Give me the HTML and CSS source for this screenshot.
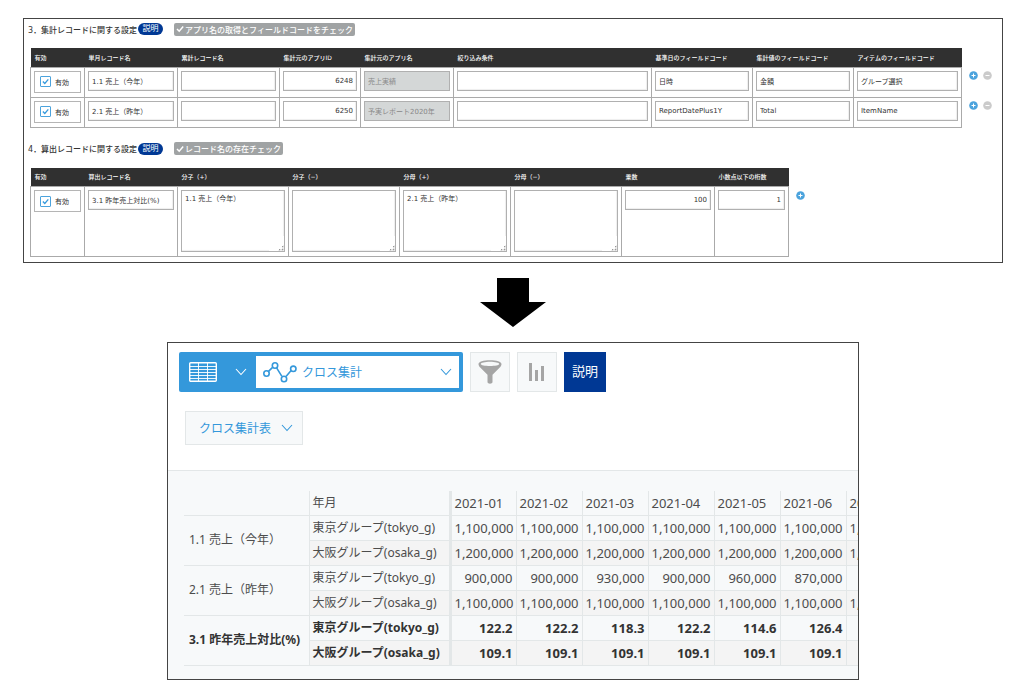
FILE: index.html
```html
<!DOCTYPE html>
<html lang="ja">
<head>
<meta charset="utf-8">
<meta name="viewport" content="width=device-width, initial-scale=1">
<title>クロス集計の設定</title>
<link rel="stylesheet" href="styles.css">
</head>
<body>
<svg class="symbols" aria-hidden="true">
  <symbol id="plus" viewBox="0 0 9 9"><circle cx="4.500" cy="4.500" r="4.300" fill="#4ba3dd"/><path d="M4.500 2.500v4M2.500 4.500h4" stroke="#fff" stroke-width="1"/></symbol>
  <symbol id="minus" viewBox="0 0 9 9"><circle cx="4.500" cy="4.500" r="4.300" fill="#cbcbcb"/><path d="M2.500 4.500h4" stroke="#fff" stroke-width="1"/></symbol>
  <symbol id="check" viewBox="0 0 8 8"><path d="M1 4l2.200 2.200L7.200 1.600" fill="none" stroke="currentColor" stroke-width="1.500"/></symbol>
  <symbol id="chevron" viewBox="0 0 12 8"><path d="M1 1l5 5.500L11 1" fill="none" stroke="currentColor" stroke-width="1.100"/></symbol>
</svg>
<main class="page">
  <section class="settings">
    <div class="heading">
      <h2>3．集計レコードに関する設定</h2>
      <button class="badge" type="button">説明</button>
      <button class="verify" type="button"><svg class="tick"><use href="#check"/></svg>アプリ名の取得とフィールドコードをチェック</button>
    </div>
    <table class="form-table">
      <colgroup><col class="w54"><col class="w93"><col class="w102"><col class="w81"><col class="w93"><col class="w198"><col class="w101"><col class="w101"><col class="w108"><col class="w37"></colgroup>
      <thead><tr><th>有効</th><th>単月レコード名</th><th>累計レコード名</th><th>集計元のアプリID</th><th>集計元のアプリ名</th><th>絞り込み条件</th><th>基準日のフィールドコード</th><th>集計値のフィールドコード</th><th>アイテムのフィールドコード</th><td class="actions"></td></tr></thead>
      <tbody>
        <tr>
          <td><label class="enable"><input type="checkbox" checked><svg class="mark"><use href="#check"/></svg><span>有効</span></label></td>
          <td><input class="field" aria-label="単月レコード名" value="1.1 売上（今年）"></td>
          <td><input class="field" aria-label="累計レコード名"></td>
          <td><input class="field number" aria-label="集計元のアプリID" value="6248"></td>
          <td><input class="field" aria-label="集計元のアプリ名" value="売上実績" disabled></td>
          <td><input class="field" aria-label="絞り込み条件"></td>
          <td><input class="field" aria-label="基準日のフィールドコード" value="日時"></td>
          <td><input class="field" aria-label="集計値のフィールドコード" value="金額"></td>
          <td><input class="field" aria-label="アイテムのフィールドコード" value="グループ選択"></td>
          <td class="actions"><div class="action-list"><button type="button" aria-label="行を追加"><svg><use href="#plus"/></svg></button><button type="button" aria-label="行を削除"><svg><use href="#minus"/></svg></button></div></td>
        </tr>
        <tr>
          <td><label class="enable"><input type="checkbox" checked><svg class="mark"><use href="#check"/></svg><span>有効</span></label></td>
          <td><input class="field" aria-label="単月レコード名" value="2.1 売上（昨年）"></td>
          <td><input class="field" aria-label="累計レコード名"></td>
          <td><input class="field number" aria-label="集計元のアプリID" value="6250"></td>
          <td><input class="field" aria-label="集計元のアプリ名" value="予実レポート2020年" disabled></td>
          <td><input class="field" aria-label="絞り込み条件"></td>
          <td><input class="field" aria-label="基準日のフィールドコード" value="ReportDatePlus1Y"></td>
          <td><input class="field" aria-label="集計値のフィールドコード" value="Total"></td>
          <td><input class="field" aria-label="アイテムのフィールドコード" value="ItemName"></td>
          <td class="actions"><div class="action-list"><button type="button" aria-label="行を追加"><svg><use href="#plus"/></svg></button><button type="button" aria-label="行を削除"><svg><use href="#minus"/></svg></button></div></td>
        </tr>
      </tbody>
    </table>
    <div class="heading">
      <h2>4．算出レコードに関する設定</h2>
      <button class="badge" type="button">説明</button>
      <button class="verify" type="button"><svg class="tick"><use href="#check"/></svg>レコード名の存在チェック</button>
    </div>
    <table class="form-table calc">
      <colgroup><col class="w54"><col class="w93"><col class="w111"><col class="w111"><col class="w111"><col class="w111"><col class="w93"><col class="w74"><col class="w26"></colgroup>
      <thead><tr><th>有効</th><th>算出レコード名</th><th>分子（+）</th><th>分子（−）</th><th>分母（+）</th><th>分母（−）</th><th>乗数</th><th>小数点以下の桁数</th><td class="actions"></td></tr></thead>
      <tbody>
        <tr>
          <td><label class="enable"><input type="checkbox" checked><svg class="mark"><use href="#check"/></svg><span>有効</span></label></td>
          <td><input class="field" aria-label="算出レコード名" value="3.1 昨年売上対比(%)"></td>
          <td><textarea class="field" aria-label="分子（+）">1.1 売上（今年）</textarea></td>
          <td><textarea class="field" aria-label="分子（−）"></textarea></td>
          <td><textarea class="field" aria-label="分母（+）">2.1 売上（昨年）</textarea></td>
          <td><textarea class="field" aria-label="分母（−）"></textarea></td>
          <td><input class="field number" aria-label="乗数" value="100"></td>
          <td><input class="field number" aria-label="小数点以下の桁数" value="1"></td>
          <td class="actions"><div class="action-list"><button type="button" aria-label="行を追加"><svg><use href="#plus"/></svg></button></div></td>
        </tr>
      </tbody>
    </table>
  </section>

  <svg class="arrow" viewBox="0 0 66 49" aria-hidden="true"><path d="M17 0h32v24h17L33 49 0 24h17z"/></svg>

  <section class="report">
    <div class="toolbar">
      <div class="view-picker">
        <button class="view-type" type="button" aria-label="一覧の形式">
          <svg class="grid-icon" viewBox="0 0 28 20"><g fill="none" stroke="#fff"><rect x=".7" y=".7" width="26.600" height="18.600" rx="1" stroke-width="1.400"/><path d="M9.500 1v18M18.500 1v18M1 4.500h26M1 7.500h26M1 10.500h26M1 13.500h26M1 16.500h26" stroke-width=".9"/></g></svg>
          <svg class="chevron"><use href="#chevron"/></svg>
        </button>
        <label class="view-name">
          <svg class="graph-icon" viewBox="0 0 34 21"><g fill="none" stroke="#3498db" stroke-width="1.600"><path d="M5.500 9.300L9.300 5.700M13.600 5.800l5.300 8.600M23 14.400l5.100-5.900"/><circle cx="3.500" cy="11.500" r="2.700"/><circle cx="12" cy="3.500" r="2.700"/><circle cx="21" cy="17" r="2.700"/><circle cx="30.300" cy="6.800" r="2.700"/></g></svg>
          <select aria-label="一覧"><option>クロス集計</option></select>
          <svg class="chevron"><use href="#chevron"/></svg>
        </label>
      </div>
      <button class="tool" type="button" aria-label="絞り込む"><svg viewBox="0 0 24 24"><path fill="#a5a5a5" fill-rule="evenodd" d="M12 .3C5.500.3.500 1.800.500 4c0 1.500.8 2.600 2 3.800l7 7V22c0 2.200 5 2.200 5 0v-7.200l7-7c1.200-1.200 2-2.300 2-3.800C23.500 1.800 18.500.3 12 .3zM12 1.800c5 0 9.200 1 9.200 2.200S17 6 12 6 2.800 5.200 2.800 4 7 1.800 12 1.800z"/></svg></button>
      <button class="tool" type="button" aria-label="グラフ"><svg viewBox="0 0 24 24"><path fill="#a5a5a5" d="M4 3h3v18H4zM10 10h3v11h-3zM16 6h3v15h-3z"/></svg></button>
      <button class="help" type="button">説明</button>
    </div>
    <div class="chart-type">
      <select aria-label="表の種類"><option>クロス集計表</option></select>
      <svg class="chevron"><use href="#chevron"/></svg>
    </div>
    <div class="result">
      <table class="cross">
        <colgroup><col class="c-record"><col class="c-group"><col class="c-month"><col class="c-month"><col class="c-month"><col class="c-month"><col class="c-month"><col class="c-month"><col class="c-month"></colgroup>
        <thead><tr><td></td><th class="group">年月</th><th>2021-01</th><th>2021-02</th><th>2021-03</th><th>2021-04</th><th>2021-05</th><th>2021-06</th><th>2021-07</th></tr></thead>
        <tbody>
          <tr><th class="record" rowspan="2">1.1 売上（今年）</th><th class="group">東京グループ(tokyo_g)</th><td>1,100,000</td><td>1,100,000</td><td>1,100,000</td><td>1,100,000</td><td>1,100,000</td><td>1,100,000</td><td>1,100,000</td></tr>
          <tr class="even"><th class="group">大阪グループ(osaka_g)</th><td>1,200,000</td><td>1,200,000</td><td>1,200,000</td><td>1,200,000</td><td>1,200,000</td><td>1,200,000</td><td>1,200,000</td></tr>
          <tr><th class="record" rowspan="2">2.1 売上（昨年）</th><th class="group">東京グループ(tokyo_g)</th><td>900,000</td><td>900,000</td><td>930,000</td><td>900,000</td><td>960,000</td><td>870,000</td><td></td></tr>
          <tr class="even"><th class="group">大阪グループ(osaka_g)</th><td>1,100,000</td><td>1,100,000</td><td>1,100,000</td><td>1,100,000</td><td>1,100,000</td><td>1,100,000</td><td>1,100,000</td></tr>
          <tr class="strong"><th class="record" rowspan="2">3.1 昨年売上対比(%)</th><th class="group">東京グループ(tokyo_g)</th><td>122.2</td><td>122.2</td><td>118.3</td><td>122.2</td><td>114.6</td><td>126.4</td><td></td></tr>
          <tr class="strong even"><th class="group">大阪グループ(osaka_g)</th><td>109.1</td><td>109.1</td><td>109.1</td><td>109.1</td><td>109.1</td><td>109.1</td><td></td></tr>
        </tbody>
      </table>
    </div>
  </section>
</main>
</body>
</html>
```

FILE: styles.css
```css
* { box-sizing: border-box; }

body {
  margin: 0;
  background: #fff;
  color: #333;
  font-family: "Noto Sans", "Noto Sans CJK JP", sans-serif;
  font-size: 12px;
}

button, input, select, textarea { font: inherit; color: inherit; margin: 0; }
button { padding: 0; border: 0; background: none; cursor: pointer; }
svg { display: block; }
.symbols { display: none; }

.page { padding: 18px 21px 18px 23px; }

/* Record settings */
.settings {
  border: 1px solid #444;
  padding: 0 6px 5px 6px;
  font-family: "DejaVu Sans", "Noto Sans CJK JP", sans-serif;
  font-size: 7px;
}

.heading {
  display: flex;
  align-items: center;
  height: 20px;
  margin: 0 -2px 9px;
}
.form-table + .heading { margin-top: 11px; }

.heading h2 { margin: 0; font-size: 8px; font-weight: 500; }

.badge {
  margin-left: 1px;
  width: 25px;
  height: 12px;
  border-radius: 6px;
  background: #003894;
  color: #fff;
  font-size: 8px;
  line-height: 12px;
}

.verify {
  display: flex;
  align-items: center;
  gap: 1px;
  margin-left: 11px;
  padding: 0 2px;
  height: 13px;
  border-radius: 2px;
  background: #a0a3a4;
  color: #fff;
  font-size: 8px;
  font-weight: 500;
}
.tick { width: 8px; height: 8px; }

.form-table {
  width: 100%;
  table-layout: fixed;
  border-collapse: collapse;
}
.form-table.calc { width: 81%; }
.w26 { width: 26px; }
.w37 { width: 37px; }
.w54 { width: 54px; }
.w74 { width: 74px; }
.w81 { width: 81px; }
.w93 { width: 93px; }
.w101 { width: 101px; }
.w102 { width: 102px; }
.w108 { width: 108px; }
.w111 { width: 111px; }
.w198 { width: 198px; }

.form-table th {
  height: 19px;
  padding: 0 4px;
  background: #303030;
  color: #fff;
  font-size: 6px;
  font-weight: 500;
  text-align: left;
  white-space: nowrap;
}
.form-table td {
  padding: 3px 3px 4px;
  border: 1px solid #aaa;
  vertical-align: top;
}
.form-table .actions { border: 0; padding: 4px 0 0 7px; }

.enable {
  display: grid;
  grid-template-columns: 11px 1fr;
  align-items: center;
  column-gap: 4px;
  height: 22px;
  padding-left: 5px;
  border: 1px solid #b5b5b5;
}
.enable input {
  grid-area: 1 / 1;
  appearance: none;
  width: 11px;
  height: 11px;
  border: 1px solid #4ba3dd;
  border-radius: 1px;
}
.mark {
  grid-area: 1 / 1;
  justify-self: center;
  width: 7px;
  height: 7px;
  color: #3498db;
}
.enable input:not(:checked) + .mark { visibility: hidden; }

.field {
  display: block;
  width: 100%;
  height: 20px;
  padding: 0 3px;
  border: 1px solid #b0b0b0;
  border-radius: 0;
  background: #fff;
  box-shadow: inset -1px -1px 1px #eee;
}
.field:disabled { background: #d4d7d7; color: #888; box-shadow: none; }
.number { text-align: right; }
textarea.field { height: 62px; padding-top: 3px; line-height: 11px; resize: vertical; }
textarea.field::-webkit-resizer {
  background:
    linear-gradient(135deg, #fff 78%, transparent 78%),
    radial-gradient(#999 40%, transparent 50%) 0 0 / 3px 3px;
}

.action-list { display: flex; gap: 5px; }
.action-list svg { width: 9px; height: 9px; }

.arrow { width: 66px; height: 49px; margin: 15px auto; }

/* Cross tabulation report */
.report {
  width: 71%;
  max-width: 692px;
  margin: 0 auto;
  border: 1px solid #444;
  overflow: hidden;
}

.toolbar { display: flex; gap: 7px; padding: 9px 10px 0 11px; height: 49px; }

.view-picker {
  display: flex;
  width: 284px;
  padding: 4px;
  border-radius: 2px;
  background: #3498db;
}
.view-type {
  display: flex;
  align-items: center;
  justify-content: space-between;
  width: 73px;
  padding: 0 9px 0 6px;
  color: #fff;
}
.grid-icon { width: 28px; height: 20px; }
.chevron { width: 12px; height: 8px; pointer-events: none; }
.view-name {
  flex: 1;
  display: grid;
  grid-template-columns: 34px 1fr 12px;
  align-items: center;
  padding: 0 7px;
  background: #fff;
  color: #3498db;
}
.graph-icon { width: 34px; height: 21px; }
.view-name select {
  grid-area: 1 / 2 / 2 / 4;
  appearance: none;
  height: 32px;
  padding: 0 18px 0 5px;
  border: 0;
  background: transparent;
}
.view-name .chevron { grid-area: 1 / 3; }

.tool {
  display: grid;
  place-items: center;
  width: 40px;
  height: 40px;
  border: 1px solid #e3e7e8;
  background: #f7f9fa;
}
.tool svg { width: 24px; height: 24px; }
.help {
  width: 42px;
  height: 40px;
  padding-bottom: 4px;
  background: #003894;
  color: #fff;
  font-size: 13px;
}

.chart-type {
  display: grid;
  grid-template-columns: 1fr 12px 10px;
  align-items: center;
  width: 118px;
  margin: 19px 0 25px 17px;
  color: #3498db;
}
.chart-type select {
  grid-area: 1 / 1 / 2 / 4;
  appearance: none;
  height: 34px;
  padding: 0 0 0 13px;
  border: 1px solid #e3e7e8;
  border-radius: 0;
  background: #f7f9fa;
}
.chart-type .chevron { grid-area: 1 / 2; }

.result {
  padding: 20px 0 13px 16px;
  border-top: 1px solid #e3e7e8;
  background: #f7f9fa;
  overflow: hidden;
}
.cross {
  width: 728px;
  table-layout: fixed;
  border-collapse: collapse;
  color: #4c4c4c;
  font-size: 13px;
}
.c-record { width: 125px; }
.c-group { width: 141px; }
.c-month { width: 66px; }
.cross tr { height: 25px; }
.cross thead tr { height: 24px; }
.cross th, .cross td {
  padding: 0 3px;
  border: 1px solid #e3e7e8;
  border-top: 0;
  line-height: 22px;
  text-align: right;
  font-weight: inherit;
  white-space: nowrap;
}
.cross thead th { text-align: left; }
.cross tr > :first-child:not(.group) { border-left: 0; }
.cross .record, .cross .group { text-align: left; font-size: 12px; }
.cross .record { padding-left: 5px; }
.cross .group { border-right-width: 3px; }
.cross .even .group, .cross .even td { background: #f4f4f4; }
.cross .strong { color: #333; font-weight: 700; }
```
